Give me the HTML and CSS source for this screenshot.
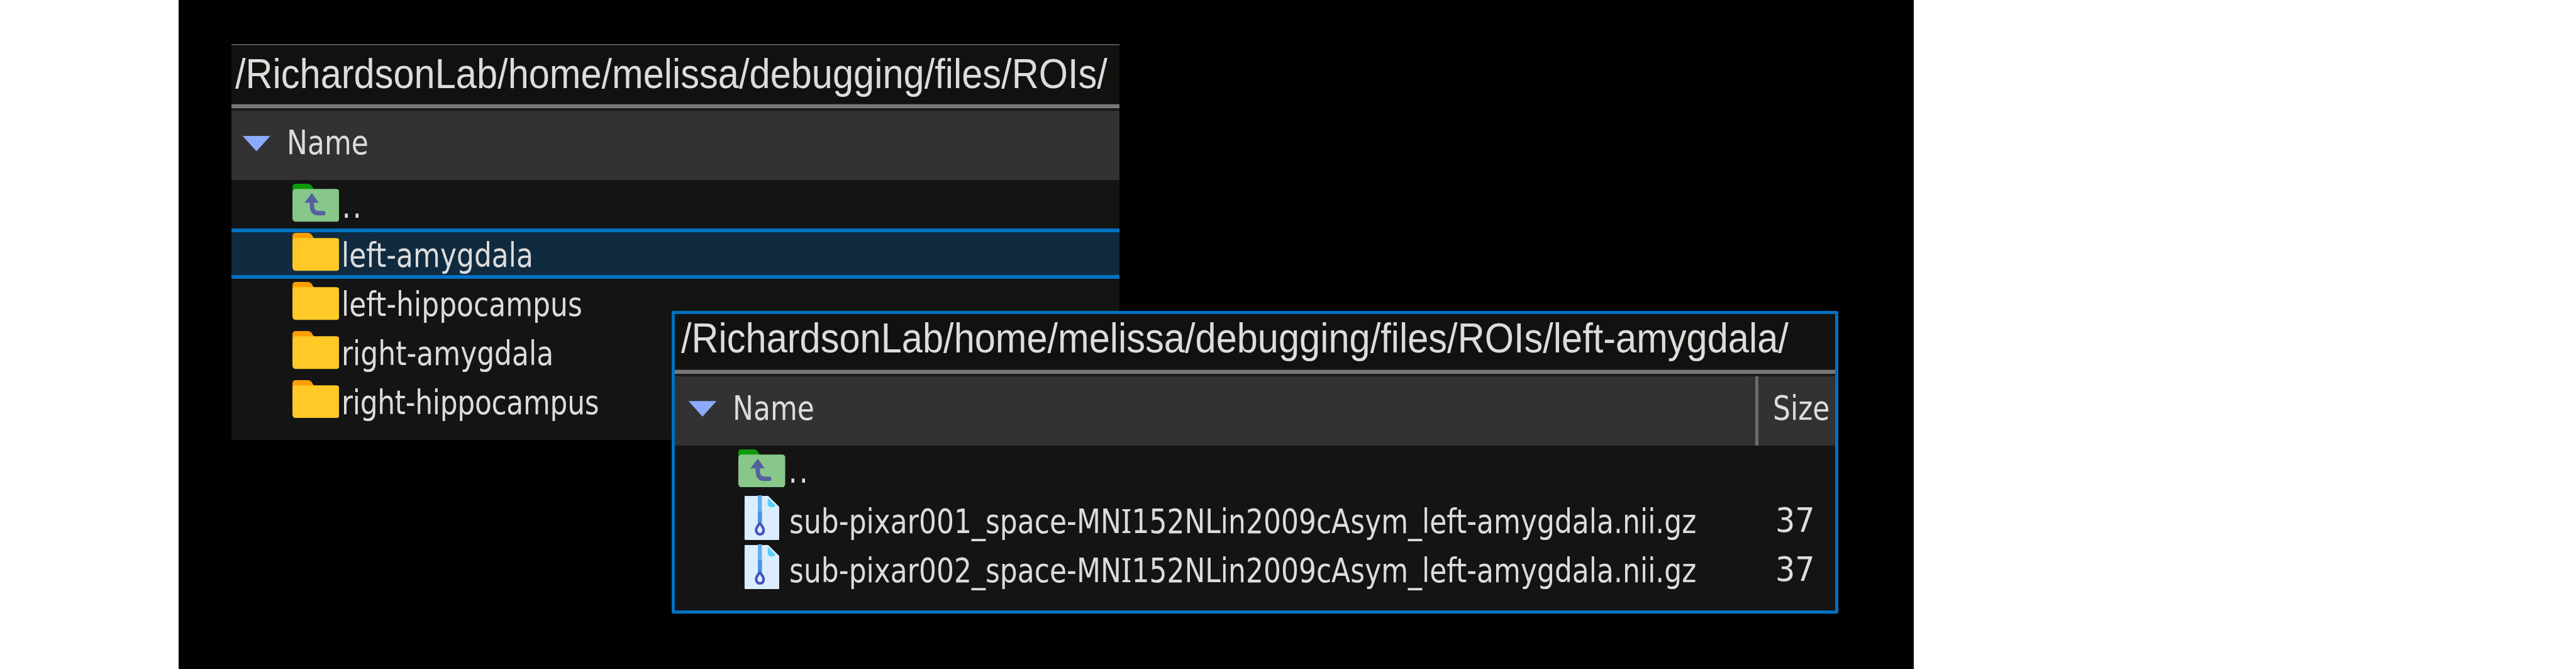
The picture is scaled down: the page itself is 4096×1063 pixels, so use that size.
FILE: index.html
```html
<!DOCTYPE html>
<html lang="en">
<head>
<meta charset="utf-8">
<title>ROI folders</title>
<link rel="stylesheet" href="styles.css">
</head>
<body>
<svg class="defs" aria-hidden="true">
  <symbol id="folder" viewBox="0 0 82 66" preserveAspectRatio="none">
    <path fill="#ff9e00" d="M0 18V6Q0 0 6 0H27Q31 0 34 4L39 12V18Z"/>
    <path fill="#ffc927" d="M6 9H76Q82 9 82 15V59Q82 66 75 66H7Q0 66 0 59V14Q1 9 6 9Z"/>
  </symbol>
  <symbol id="up" viewBox="0 0 82 66" preserveAspectRatio="none">
    <path fill="#0a9a0a" d="M0 18V6Q0 0 6 0H27Q31 0 34 4L39 12V18Z"/>
    <path fill="#88c78a" d="M6 9H76Q82 9 82 15V59Q82 66 75 66H7Q0 66 0 59V15Q1 9 6 9Z"/>
    <path fill="#5560a0" d="M34 16L46 33H21Z"/>
    <path fill="none" stroke="#5560a0" stroke-width="7.5" stroke-linecap="round" d="M34 30V40Q35 51 45 51H54"/>
  </symbol>
  <symbol id="zip" viewBox="0 0 62 78" preserveAspectRatio="none">
    <path fill="#dbeeff" d="M2 1H42L61 20V76Q61 78 59 78H3Q1 78 1 76V3Q1 1 2 1Z"/>
    <path fill="#5bd0ff" d="M42 5L55 18Q52 21 48 21Q41 21 41 14Q41 8 42 5Z"/>
    <path fill="#64aeea" d="M24 0H31V46H24Z"/>
    <path fill="#4b93df" d="M24 28H31V50H24Z"/>
    <path fill="none" stroke="#4653bd" stroke-width="4.5" stroke-linejoin="round" d="M27.500 49Q21 56 21 61Q22 68 27.500 68Q34 68 34 61Q34 56 27.500 49Z"/>
  </symbol>
</svg>
<main class="stage">
  <section class="panel panel-parent">
    <div class="path"><span class="path-text">/RichardsonLab/home/melissa/debugging/files/ROIs/</span></div>
    <div class="head">
      <div class="col-name"><i class="sort"></i><span class="label">Name</span></div>
    </div>
    <div class="row"><svg class="icon"><use href="#up"/></svg><span class="label dots">..</span></div>
    <div class="row selected"><svg class="icon"><use href="#folder"/></svg><span class="label">left-amygdala</span></div>
    <div class="row"><svg class="icon"><use href="#folder"/></svg><span class="label">left-hippocampus</span></div>
    <div class="row"><svg class="icon"><use href="#folder"/></svg><span class="label">right-amygdala</span></div>
    <div class="row"><svg class="icon"><use href="#folder"/></svg><span class="label tight">right-hippocampus</span></div>
  </section>
  <section class="panel panel-child">
    <div class="path"><span class="path-text">/RichardsonLab/home/melissa/debugging/files/ROIs/left-amygdala/</span></div>
    <div class="head">
      <div class="col-name"><i class="sort"></i><span class="label">Name</span></div>
      <div class="col-size"><span class="label">Size</span></div>
    </div>
    <div class="row"><svg class="icon"><use href="#up"/></svg><span class="label dots">..</span></div>
    <div class="row"><svg class="icon file"><use href="#zip"/></svg><span class="label name">sub-pixar001_space-MN<span class="serif-i">I</span>152NLin2009cAsym_left-amygdala.nii.gz</span><span class="label size">37</span></div>
    <div class="row"><svg class="icon file"><use href="#zip"/></svg><span class="label name">sub-pixar002_space-MN<span class="serif-i">I</span>152NLin2009cAsym_left-amygdala.nii.gz</span><span class="label size">37</span></div>
  </section>
</main>
</body>
</html>
```
FILE: styles.css
```css
html {
  font-size: 9.1695px;
  background: #fff;
}
body {
  margin: 0;
  overflow: hidden;
}
* {
  box-sizing: border-box;
}
.defs {
  display: block;
  width: 0;
  height: 0;
}
.stage {
  position: relative;
  height: 1063px;
  width: 300.9rem;
  margin-left: 31rem;
  background: #000;
}

/* Two overlapping file windows on the black canvas */
.panel {
  --inset: 0rem;
  position: absolute;
  background: #141414;
  color: #dcdcdc;
  overflow: hidden;
}
.panel-parent {
  left: 9.1rem;
  top: 7.6rem;
  width: 154rem;
  height: 68.6rem;
  border-top: 0.25rem solid #555;
}
.panel-child {
  --inset: 0.4rem;
  left: 85.5rem;
  top: 53.9rem;
  width: 202.3rem;
  height: 52.4rem;
  border: 0.6rem solid #0070c0;
  border-radius: 0.3rem;
}

.path {
  height: 11.4rem;
  padding-left: calc(0.65rem + var(--inset));
  background: #12110f;
  border-bottom: 0.45rem solid #1b1b1b;
  box-shadow: inset 0 -0.7rem #777;
  font: 7.2rem/9.95rem "Liberation Sans", Arial, sans-serif;
  white-space: nowrap;
}
.panel-child .path {
  height: 10.75rem;
  line-height: 8.5rem;
}
.path-text {
  display: inline-block;
  transform: scaleX(0.902);
  transform-origin: 0 50%;
}

.label {
  display: block;
  font: 5.8rem/7.9rem "DejaVu Sans Condensed", "DejaVu Sans", sans-serif;
  font-stretch: condensed;
  white-space: nowrap;
  transform: scaleX(0.92);
  transform-origin: 0 50%;
}
.head {
  display: flex;
  height: 12rem;
  background: #323232;
}
.head .label {
  line-height: 11.2rem;
}
.col-name {
  display: flex;
  flex: 1;
  padding-left: calc(1.95rem + var(--inset));
}
.sort {
  width: 4.85rem;
  height: 2.7rem;
  margin: 4.3rem 2.8rem 0 0;
  background: #8cabff;
  clip-path: polygon(0 0, 100% 0, 50% 100%);
}
.col-size {
  width: 13.9rem;
  padding-left: 2.55rem;
  border-left: 0.65rem solid #6b6b6b;
}

.row {
  position: relative;
  display: flex;
  height: 8.5rem;
  padding: 0.6rem 0 0 calc(10.57rem + var(--inset));
}
.selected::before {
  content: "";
  position: absolute;
  inset: -0.15rem 0 -0.1rem;
  background: #102a40;
  border: solid #0070c0;
  border-width: 0.75rem 0;
}
.selected > * {
  position: relative;
}
.icon {
  flex: none;
  width: 8.15rem;
  height: 6.6rem;
  margin: 0.05rem 0.45rem 0 0;
}
.icon.file {
  width: 6.2rem;
  height: 7.75rem;
  margin: -0.5rem 1.75rem 0 0.95rem;
}
.dots {
  padding-left: 0.1rem;
  letter-spacing: 0.35rem;
}
.tight {
  letter-spacing: -0.04rem;
}
.name {
  flex: 1;
}
.serif-i {
  font-family: "Noto Sans", sans-serif;
}
.size {
  flex: none;
  width: 11.6rem;
  transform: scaleX(1.03);
}
```
